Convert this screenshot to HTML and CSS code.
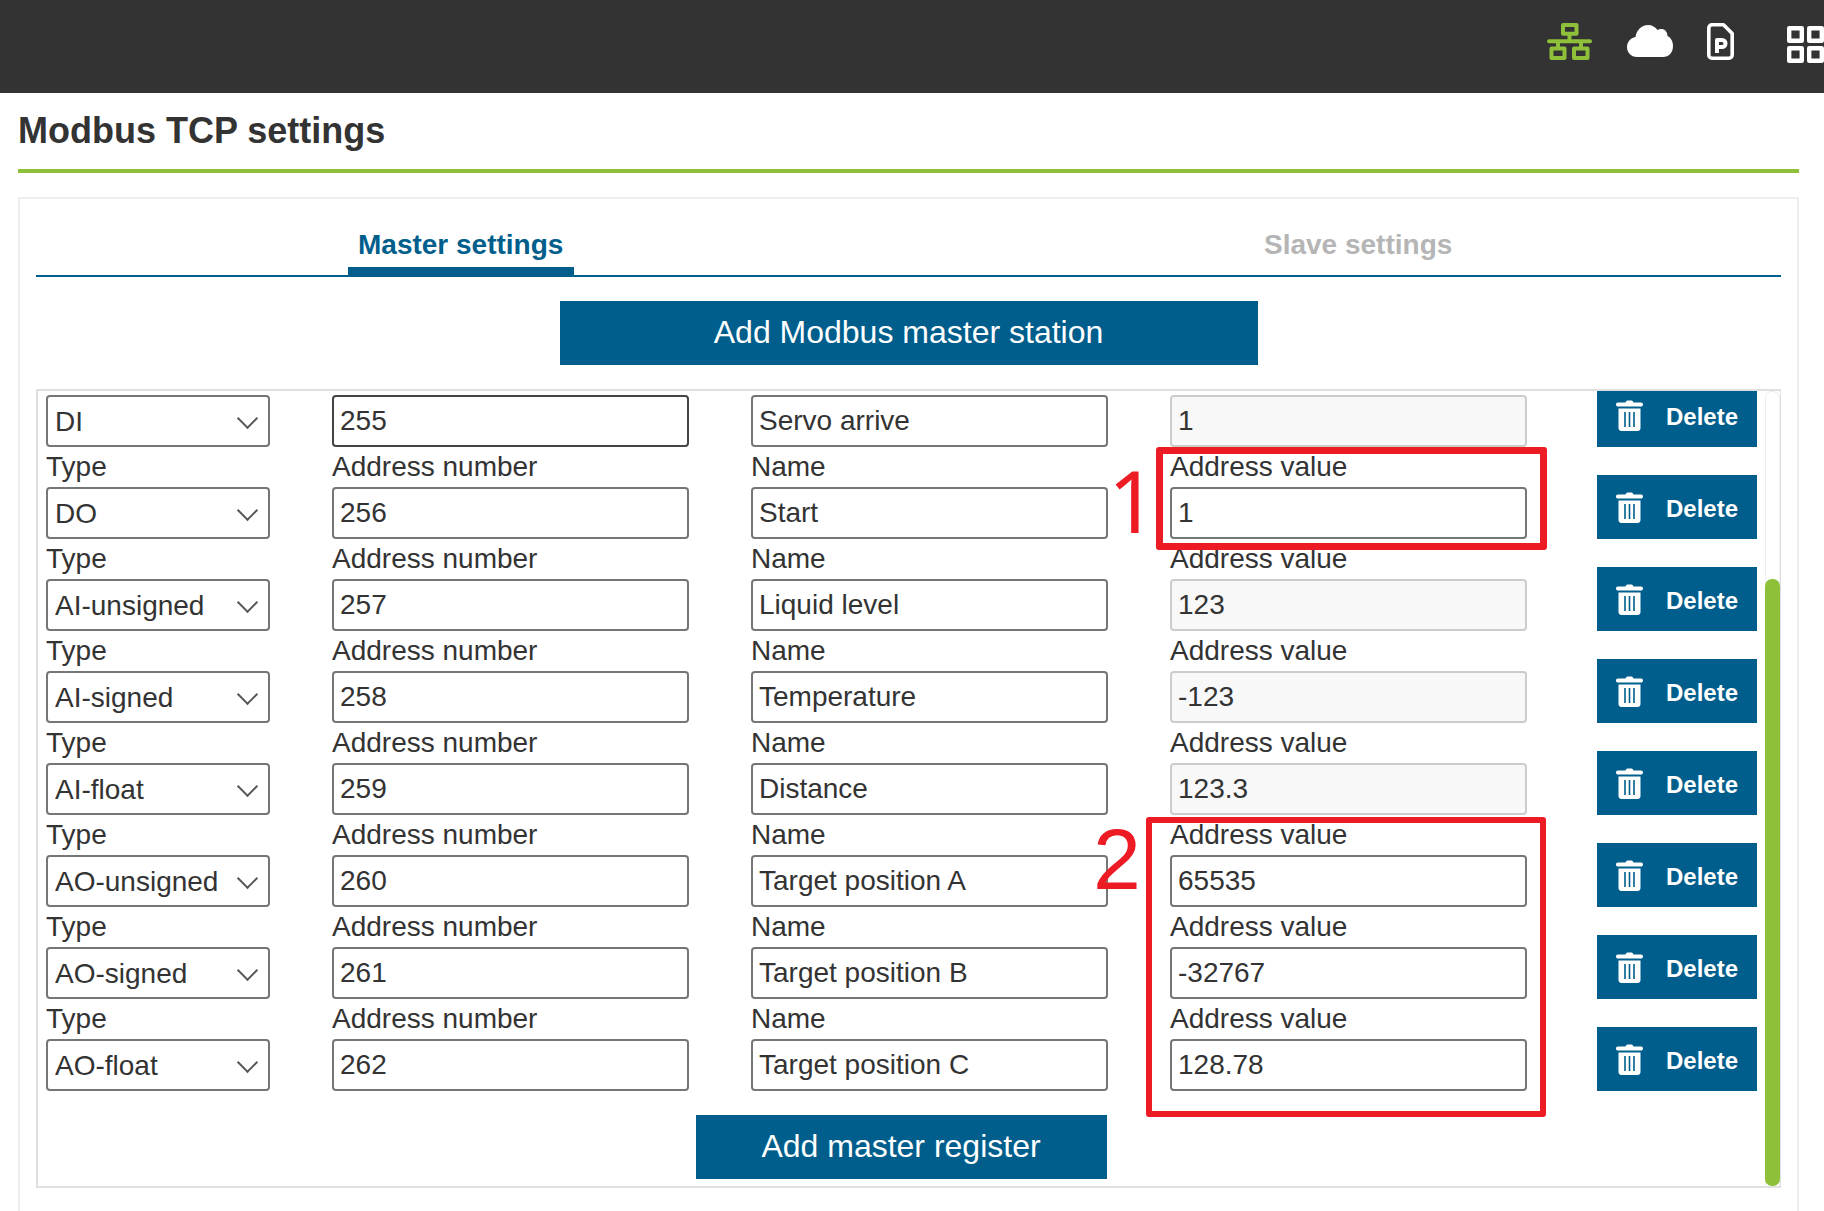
FILE: index.html
```html
<!DOCTYPE html>
<html lang="en">
<head>
    <meta charset="UTF-8">
    <title>Modbus TCP settings</title>
    <link rel="stylesheet" href="styles.css">
</head>
<body>

<svg class="sprite" xmlns="http://www.w3.org/2000/svg">
    <symbol id="trash" viewBox="0 0 27 31">
        <path fill="#fff" d="M9.5 2.5C10 1 11 .5 12 .5h3c1 0 2 .5 2.500 2H25c1.200 0 2 .8 2 1.900S26.200 6.500 25 6.500H2C.8 6.500 0 5.500 0 4.400S.8 2.500 2 2.500z"/>
        <path fill="#fff" d="M2.500 8.500h22V28c0 1.700-1.300 3-3 3h-16c-1.700 0-3-1.300-3-3z"/>
        <path stroke="#005e8c" stroke-width="1.600" d="M9 12v15M13.500 12v15M18 12v15"/>
    </symbol>
</svg>

<header class="topbar">
    <svg class="icon-net" viewBox="0 0 45 37" fill="none" stroke="#8fc03a" stroke-width="4" stroke-linejoin="round" stroke-linecap="round">
        <rect x="16" y="2" width="13.500" height="8.700"/>
        <path d="M22.500 11v7M2 18.300h41M11 18.300v6M34 18.300v6"/>
        <rect x="4.500" y="25.500" width="13" height="9.500"/>
        <rect x="27" y="25.500" width="13.500" height="9.500"/>
    </svg>
    <svg class="icon-cloud" viewBox="0 0 46 32" fill="#fff">
        <path d="M10 32C4 32 0 27.500 0 22c0-5 3.500-9 8.500-10C9.500 5 14.500 0 21 0c4 0 7.500 2 9.500 5 1.500-1 3-1.200 4.500-1 3.500.5 5.500 3.500 5.500 7 3.500 1.500 5.500 5.500 5.500 10 0 6.500-4 11-10 11z"/>
    </svg>
    <svg class="icon-doc" viewBox="0 0 27 37" fill="none" stroke="#fff" stroke-width="3.600" stroke-linejoin="round">
        <path d="M5 1.800h11.500L25.200 10.500V32a3.200 3.200 0 0 1-3.200 3.200H5A3.200 3.200 0 0 1 1.800 32V5A3.200 3.200 0 0 1 5 1.800z"/>
        <path stroke-width="4" d="M10 30V17h5a3.500 3.500 0 0 1 0 7h-5"/>
    </svg>
    <svg class="icon-apps" viewBox="0 0 40 37" fill="none" stroke="#fff" stroke-width="4.400" stroke-linejoin="round">
        <rect x="2.200" y="2.200" width="12.600" height="12.600"/>
        <rect x="22.200" y="2.200" width="12.600" height="12.600"/>
        <rect x="2.200" y="22.200" width="12.600" height="12.600"/>
        <rect x="22.200" y="22.200" width="12.600" height="12.600"/>
    </svg>
</header>

<main class="page">
    <h1 class="page-title">Modbus TCP settings</h1>

    <section class="panel">
        <div class="tabs">
            <a class="tab active">Master settings</a>
            <a class="tab">Slave settings</a>
        </div>

        <div class="add-station">
            <button class="btn-main btn-station">Add Modbus master station</button>
        </div>

        <div class="list">
            <div class="list-content">
                <div class="row">
                    <div class="field">
                        <div class="select-box"><select><option>DI</option></select></div>
                        <label>Type</label>
                    </div>
                    <div class="field"><input class="focused" type="text" value="255"><label>Address number</label></div>
                    <div class="field"><input type="text" value="Servo arrive"><label>Name</label></div>
                    <div class="field"><input class="locked" type="text" value="1" readonly><label>Address value</label></div>
                    <button class="btn-delete"><svg class="trash"><use href="#trash"/></svg>Delete</button>
                </div>
                <div class="row">
                    <div class="field">
                        <div class="select-box"><select><option>DO</option></select></div>
                        <label>Type</label>
                    </div>
                    <div class="field"><input type="text" value="256"><label>Address number</label></div>
                    <div class="field"><input type="text" value="Start"><label>Name</label></div>
                    <div class="field"><input type="text" value="1"><label>Address value</label></div>
                    <button class="btn-delete"><svg class="trash"><use href="#trash"/></svg>Delete</button>
                </div>
                <div class="row">
                    <div class="field">
                        <div class="select-box"><select><option>AI-unsigned</option></select></div>
                        <label>Type</label>
                    </div>
                    <div class="field"><input type="text" value="257"><label>Address number</label></div>
                    <div class="field"><input type="text" value="Liquid level"><label>Name</label></div>
                    <div class="field"><input class="locked" type="text" value="123" readonly><label>Address value</label></div>
                    <button class="btn-delete"><svg class="trash"><use href="#trash"/></svg>Delete</button>
                </div>
                <div class="row">
                    <div class="field">
                        <div class="select-box"><select><option>AI-signed</option></select></div>
                        <label>Type</label>
                    </div>
                    <div class="field"><input type="text" value="258"><label>Address number</label></div>
                    <div class="field"><input type="text" value="Temperature"><label>Name</label></div>
                    <div class="field"><input class="locked" type="text" value="-123" readonly><label>Address value</label></div>
                    <button class="btn-delete"><svg class="trash"><use href="#trash"/></svg>Delete</button>
                </div>
                <div class="row">
                    <div class="field">
                        <div class="select-box"><select><option>AI-float</option></select></div>
                        <label>Type</label>
                    </div>
                    <div class="field"><input type="text" value="259"><label>Address number</label></div>
                    <div class="field"><input type="text" value="Distance"><label>Name</label></div>
                    <div class="field"><input class="locked" type="text" value="123.3" readonly><label>Address value</label></div>
                    <button class="btn-delete"><svg class="trash"><use href="#trash"/></svg>Delete</button>
                </div>
                <div class="row">
                    <div class="field">
                        <div class="select-box"><select><option>AO-unsigned</option></select></div>
                        <label>Type</label>
                    </div>
                    <div class="field"><input type="text" value="260"><label>Address number</label></div>
                    <div class="field"><input type="text" value="Target position A"><label>Name</label></div>
                    <div class="field"><input type="text" value="65535"><label>Address value</label></div>
                    <button class="btn-delete"><svg class="trash"><use href="#trash"/></svg>Delete</button>
                </div>
                <div class="row">
                    <div class="field">
                        <div class="select-box"><select><option>AO-signed</option></select></div>
                        <label>Type</label>
                    </div>
                    <div class="field"><input type="text" value="261"><label>Address number</label></div>
                    <div class="field"><input type="text" value="Target position B"><label>Name</label></div>
                    <div class="field"><input type="text" value="-32767"><label>Address value</label></div>
                    <button class="btn-delete"><svg class="trash"><use href="#trash"/></svg>Delete</button>
                </div>
                <div class="row row-last">
                    <div class="field">
                        <div class="select-box"><select><option>AO-float</option></select></div>
                    </div>
                    <div class="field"><input type="text" value="262"></div>
                    <div class="field"><input type="text" value="Target position C"></div>
                    <div class="field"><input type="text" value="128.78"></div>
                    <button class="btn-delete"><svg class="trash"><use href="#trash"/></svg>Delete</button>
                </div>

                <div class="add-register">
                    <button class="btn-main btn-register">Add master register</button>
                </div>
            </div>
            <div class="scrollbar"><div class="scrollbar-thumb"></div></div>
        </div>
    </section>

    <!-- red notes drawn on top of the screenshot -->
    <div class="note-box note-box-1"></div>
    <div class="note-num note-num-1">1</div>
    <div class="note-box note-box-2"></div>
    <div class="note-num note-num-2">2</div>
</main>

</body>
</html>
```

FILE: styles.css
```css
* {
    box-sizing: border-box;
}
html, body {
    margin: 0;
    padding: 0;
    height: 100%;
    overflow: hidden;
}
body {
    font-family: "Liberation Sans", Arial, sans-serif;
    color: #333;
    background: #fff;
}
.sprite {
    display: none;
}

/* top bar */
.topbar {
    height: 93px;
    background: #333;
    display: flex;
    justify-content: flex-end;
    align-items: flex-start;
    overflow: hidden;
}
.topbar svg {
    display: block;
    flex: none;
}
.icon-net {
    width: 45px;
    height: 37px;
    margin-top: 23px;
}
.icon-cloud {
    width: 46px;
    height: 32px;
    margin: 25px 0 0 35px;
}
.icon-doc {
    width: 27px;
    height: 37px;
    margin: 23px 0 0 34px;
}
.icon-apps {
    width: 40px;
    height: 37px;
    margin: 26px -3px 0 53px;
}

/* page */
.page {
    position: relative;
    height: 1118px;
    padding: 0 25px 0 18px;
    overflow: hidden;
}
.page-title {
    margin: 0;
    height: 80px;
    font-size: 36px;
    line-height: 76px;
    font-weight: bold;
    border-bottom: 4px solid #8fc03a;
}
.panel {
    margin-top: 24px;
    height: 1100px;
    padding: 0 16px;
    border: 2px solid #eee;
}

/* tabs */
.tabs {
    display: flex;
    gap: 680px;
    padding-left: 312px;
    border-bottom: 2px solid #005e8c;
}
.tab {
    height: 76px;
    padding: 30px 10px 0;
    font-size: 28px;
    line-height: 32px;
    font-weight: bold;
    color: #b5b5b5;
}
.tab.active {
    width: 226px;
    color: #005e8c;
    border-bottom: 8px solid #005e8c;
}

/* big blue buttons */
.btn-main {
    display: block;
    height: 64px;
    padding: 0 0 2px;
    border: 0;
    background: #005e8c;
    color: #fff;
    font-family: inherit;
    font-size: 32px;
}
.add-station {
    display: flex;
    justify-content: center;
    padding: 24px 0;
}
.btn-station {
    width: 698px;
}
.add-register {
    display: flex;
    justify-content: center;
    padding-top: 24px;
    margin-left: -9px;
}
.btn-register {
    width: 411px;
}

/* register list */
.list {
    display: flex;
    height: 799px;
    border: 2px solid #e0e0e0;
    border-right-width: 1px;
}
.list-content {
    flex: 1;
    min-width: 0;
    padding: 4px 0 0 8px;
    overflow: hidden;
}
.row {
    display: grid;
    grid-template-columns: 224px 357px 357px 357px 160px;
    column-gap: 62px;
    height: 92px;
}
.row-last {
    height: 52px;
}
.field label {
    display: block;
    height: 40px;
    font-size: 28px;
    line-height: 39px;
}
.field input,
.field select {
    display: block;
    width: 100%;
    height: 52px;
    background: #fff;
    color: #333;
    font-family: inherit;
    font-size: 28px;
    border: 2px solid #767676;
    border-radius: 4px;
    outline: 0;
}
.field input {
    padding: 0 6px;
}
.field input.focused {
    border-color: #444;
}
.field input.locked {
    background: #f8f8f8;
    border-color: #ccc;
}
.field select {
    appearance: none;
    padding: 0 30px 0 7px;
}
.select-box {
    position: relative;
}
.select-box::after {
    content: "";
    position: absolute;
    top: 16px;
    right: 15px;
    width: 13px;
    height: 13px;
    border-right: 2px solid #555;
    border-bottom: 2px solid #555;
    transform: rotate(45deg);
    pointer-events: none;
}
.btn-delete {
    display: flex;
    align-items: center;
    gap: 23px;
    width: 160px;
    height: 64px;
    margin: -12px 0 0 8px;
    padding: 4px 0 0 19px;
    border: 0;
    background: #005e8c;
    color: #fff;
    font-family: inherit;
    font-size: 24px;
    font-weight: bold;
}
.trash {
    display: block;
    width: 27px;
    height: 31px;
    margin-top: -4px;
    flex: none;
}

/* scrollbar */
.scrollbar {
    flex: none;
    width: 15px;
    padding-top: 187px;
    border: 1px solid #eee;
    border-bottom: 0;
    border-radius: 7px 7px 0 0;
}
.scrollbar-thumb {
    height: 100%;
    margin: 0 0 0 -1px;
    width: 15px;
    background: #8fc03a;
    border-radius: 7px;
}

/* annotations */
.note-box {
    position: absolute;
    border: 7px solid #ed1c24;
    border-radius: 3px;
    pointer-events: none;
}
.note-box-1 {
    left: 1156px;
    top: 354px;
    width: 391px;
    height: 103px;
}
.note-box-2 {
    left: 1146px;
    top: 724px;
    width: 400px;
    height: 300px;
    border-width: 6px;
}
.note-num {
    position: absolute;
    font-size: 86px;
    line-height: 86px;
    color: #ed1c24;
}
.note-num-1 {
    font-family: "Noto Sans", sans-serif;
    left: 1108px;
    top: 364px;
}
.note-num-2 {
    left: 1093px;
    top: 723px;
}
```
